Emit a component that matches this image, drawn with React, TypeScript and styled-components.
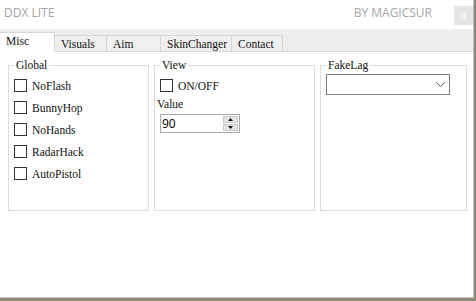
import React, { useState } from "react";
import styled, { createGlobalStyle } from "styled-components";

const GlobalStyle = createGlobalStyle`
  html, body {
    margin: 0;
    padding: 0;
    background: #8f8877;
  }
  * {
    box-sizing: border-box;
  }
`;

const Window = styled.div`
  width: 474px;
  height: 298px;
  background: #ffffff;
  border-right: 1px solid #c2c2c2;
  border-bottom: 1px solid #c2c2c2;
  display: flex;
  flex-direction: column;
`;

const TitleBar = styled.div`
  height: 29px;
  display: flex;
  align-items: flex-start;
  padding-left: 4px;
  font-family: "Open Sans", "Noto Sans", sans-serif;
  font-size: 12px;
  line-height: 16px;
  color: #a6a6a6;
`;

const Title = styled.span`
  margin-top: 5px;
  flex: 1;
`;

const Author = styled.span`
  margin-top: 5px;
  margin-right: 22px;
`;

const CloseButton = styled.div`
  width: 19px;
  height: 19px;
  margin-top: 6px;
  background: #e4e4e4;
  color: #f6f6f6;
  font-family: "Liberation Sans", sans-serif;
  font-size: 11px;
  font-weight: bold;
  line-height: 18px;
  text-align: center;
`;

const TabStrip = styled.div`
  height: 23px;
  display: flex;
  align-items: flex-end;
  background: #eeeeee;
  border-bottom: 1px solid #d6d6d6;
`;

const Tab = styled.div<{ $width: number; $active?: boolean }>`
  width: ${(p) => p.$width}px;
  height: ${(p) => (p.$active ? 20 : 16)}px;
  margin-bottom: ${(p) => (p.$active ? -1 : 0)}px;
  padding: 1px 0 0 ${(p) => (p.$active ? 6 : 6)}px;
  background: ${(p) => (p.$active ? "#ffffff" : "#efefef")};
  border-top: 1px solid #d6d6d6;
  border-right: 1px solid #d6d6d6;
  font-family: "Liberation Serif", serif;
  font-size: 11.5px;
  line-height: 14px;
  color: #111111;
  white-space: nowrap;
`;

const Content = styled.div`
  display: grid;
  grid-template-columns: 141px 161px 147px;
  column-gap: 5px;
  padding: 6px 0 0 8px;
`;

const Group = styled.fieldset`
  height: 153px;
  margin: 0;
  padding: 0 5px;
  border: 1px solid #dcdcdc;
  font-family: "Liberation Serif", serif;
  font-size: 11.5px;
  line-height: 14px;
  color: #111111;
`;

const Legend = styled.legend`
  padding: 0 2px;
`;

const CheckList = styled.div`
  display: flex;
  flex-direction: column;
  gap: 9px;
  padding-top: 7px;
`;

const CheckRow = styled.label`
  display: flex;
  align-items: center;
  height: 13px;
  gap: 5px;
  cursor: pointer;
`;

const Box = styled.span<{ $checked: boolean }>`
  width: 13px;
  height: 13px;
  border: 1px solid #333333;
  background: #ffffff;
  display: flex;
  align-items: center;
  justify-content: center;
  font-size: 10px;
  line-height: 10px;
`;

const FieldLabel = styled.div`
  margin: 5px 0 0 -3px;
`;

const NumberBox = styled.div`
  margin-top: 3px;
  width: 80px;
  height: 19px;
  border: 1px solid #a9a9a9;
  display: flex;
  align-items: stretch;
  padding: 1px 1px 1px 1px;
`;

const NumberValue = styled.span`
  flex: 1;
  font-family: "Open Sans", "Noto Sans", sans-serif;
  font-size: 12px;
  line-height: 15px;
  color: #000000;
`;

const Spinner = styled.div`
  width: 15px;
  display: flex;
  flex-direction: column;
  gap: 1px;
  background: #ffffff;
`;

const SpinButton = styled.div`
  flex: 1;
  background: #e4e4e4;
  border: 1px solid #c9c9c9;
  display: flex;
  align-items: center;
  justify-content: center;
`;

const Dropdown = styled.div`
  margin-top: 2px;
  width: 124px;
  height: 21px;
  border: 1px solid #7a7a7a;
  display: flex;
  align-items: center;
  justify-content: flex-end;
  padding-right: 4px;
`;

const Check: React.FC<{ label: string }> = ({ label }) => {
  const [on, setOn] = useState(false);
  return (
    <CheckRow onClick={() => setOn(!on)}>
      <Box $checked={on}>{on ? "✓" : ""}</Box>
      {label}
    </CheckRow>
  );
};

const tabs = [
  { name: "Misc", width: 55 },
  { name: "Visuals", width: 52 },
  { name: "Aim", width: 54 },
  { name: "SkinChanger", width: 71 },
  { name: "Contact", width: 51 },
];

const App: React.FC = () => {
  const [active, setActive] = useState("Misc");

  return (
    <>
      <GlobalStyle />
      <Window>
        <TitleBar>
          <Title>DDX LITE</Title>
          <Author>BY MAGICSUR</Author>
          <CloseButton>x</CloseButton>
        </TitleBar>
        <TabStrip>
          {tabs.map((t) => (
            <Tab
              key={t.name}
              $width={t.width}
              $active={t.name === active}
              onClick={() => setActive(t.name)}
            >
              {t.name}
            </Tab>
          ))}
        </TabStrip>
        <Content>
          <Group>
            <Legend>Global</Legend>
            <CheckList>
              <Check label="NoFlash" />
              <Check label="BunnyHop" />
              <Check label="NoHands" />
              <Check label="RadarHack" />
              <Check label="AutoPistol" />
            </CheckList>
          </Group>
          <Group>
            <Legend>View</Legend>
            <CheckList>
              <Check label="ON/OFF" />
            </CheckList>
            <FieldLabel>Value</FieldLabel>
            <NumberBox>
              <NumberValue>90</NumberValue>
              <Spinner>
                <SpinButton>
                  <svg width="5" height="3" viewBox="0 0 5 3">
                    <path d="M0 3 L2.5 0 L5 3 Z" fill="#111" />
                  </svg>
                </SpinButton>
                <SpinButton>
                  <svg width="5" height="3" viewBox="0 0 5 3">
                    <path d="M0 0 L5 0 L2.5 3 Z" fill="#111" />
                  </svg>
                </SpinButton>
              </Spinner>
            </NumberBox>
          </Group>
          <Group>
            <Legend>FakeLag</Legend>
            <Dropdown>
              <svg width="9" height="5" viewBox="0 0 9 5">
                <path d="M0.5 0.5 L4.5 4.5 L8.5 0.5" fill="none" stroke="#555" strokeWidth="1" />
              </svg>
            </Dropdown>
          </Group>
        </Content>
      </Window>
    </>
  );
};

export default App;
